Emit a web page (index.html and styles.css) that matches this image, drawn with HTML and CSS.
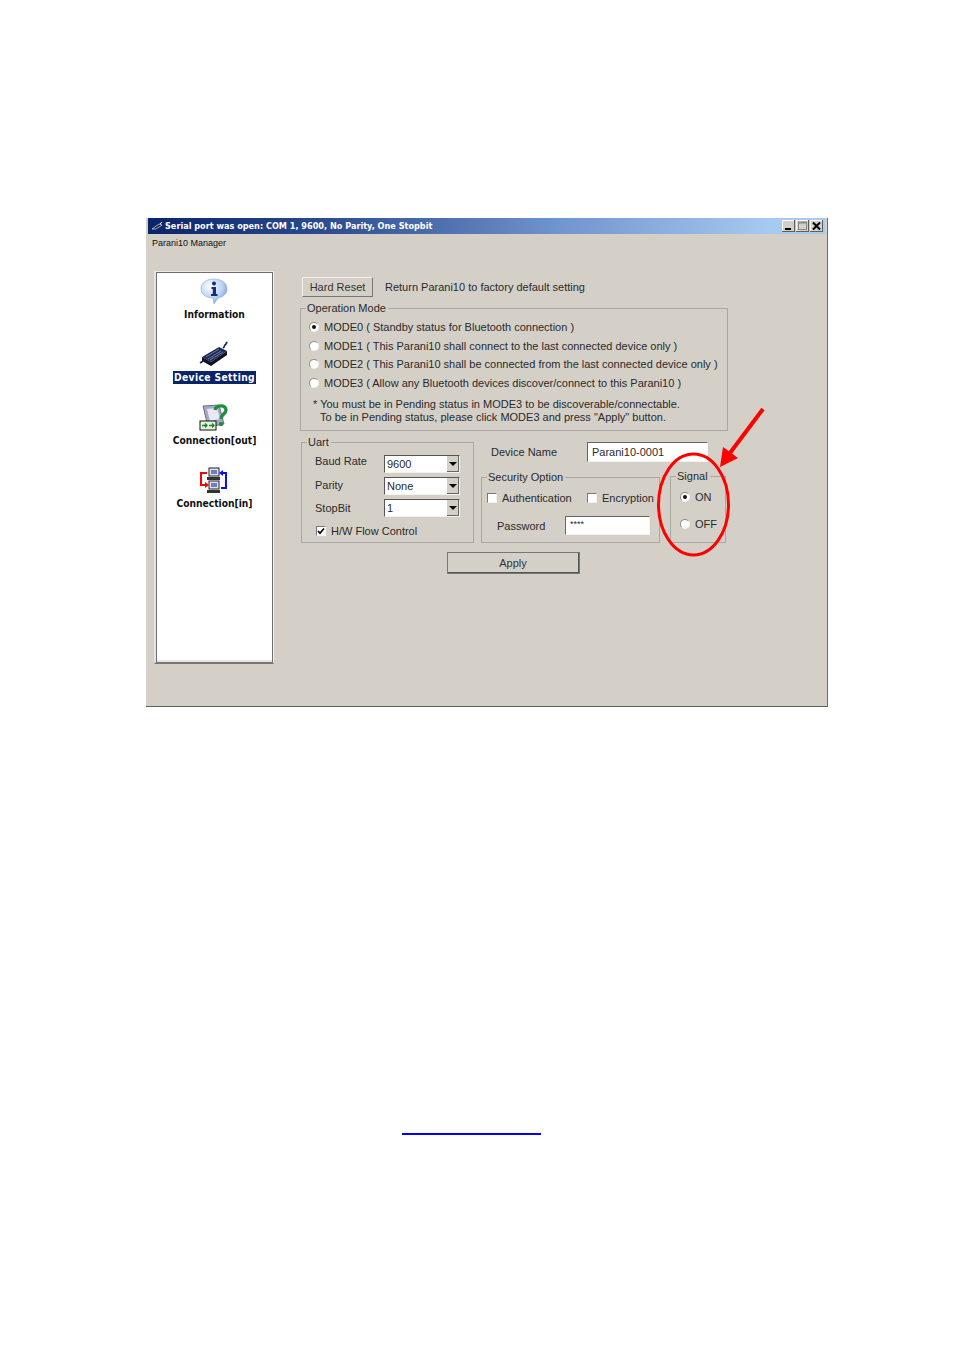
FILE: index.html
```
<!DOCTYPE html>
<html lang="en">
<head>
<meta charset="utf-8">
<title>Parani10 Manager</title>
<link rel="stylesheet" href="styles.css">
</head>
<body>
<div class="window">
  <div class="titlebar">
    <svg class="app-icon" width="12" height="10" viewBox="0 0 12 10"><path d="M1 8 L8 3 L11 4 L5 8 Z" fill="#1b1f3a" stroke="#dfe6f5" stroke-width=".7"/><path d="M9 3 L11 1" stroke="#fff"/></svg>
    <span class="title-text">Serial port was open: COM 1, 9600, No Parity, One Stopbit</span>
    <div class="win-buttons">
      <span class="win-btn"><svg width="13" height="12" viewBox="0 0 13 12"><rect x="3" y="8" width="6" height="2" fill="#000"/></svg></span>
      <span class="win-btn"><svg width="13" height="12" viewBox="0 0 13 12"><rect x="2.5" y="2.5" width="8" height="7" fill="none" stroke="#8d8a84"/><path d="M2 2.5H11" stroke="#8d8a84" stroke-width="2"/></svg></span>
      <span class="win-btn"><svg width="13" height="12" viewBox="0 0 13 12"><path d="M3 2.5 L10 9.5 M10 2.5 L3 9.5" stroke="#000" stroke-width="2"/></svg></span>
    </div>
  </div>
  <div class="app-label">Parani10 Manager</div>
  <div class="body">
    <nav class="nav">
      <div class="nav-item">
        <svg class="nav-icon" width="30" height="27" viewBox="0 0 30 27">
          <defs><radialGradient id="bub" cx=".35" cy=".3" r=".8"><stop offset="0" stop-color="#ffffff"/><stop offset=".6" stop-color="#b9d2f2"/><stop offset="1" stop-color="#6d93d6"/></radialGradient></defs>
          <path d="M15 1 C23 1 28 5 28 11 C28 16 24 19 19 20 L15 26 L14 20 C7 20 2 16 2 11 C2 5 7 1 15 1 Z" fill="url(#bub)" stroke="#8aa9dc" stroke-width=".6"/>
          <circle cx="15" cy="5.5" r="2" fill="#12307f"/>
          <path d="M12.5 9 H17 V16 H18.5 V18 H12 V16 H13.8 V11 H12.5 Z" fill="#12307f"/>
        </svg>
        <span class="nav-label">Information</span>
      </div>
      <div class="nav-item">
        <svg class="nav-icon" width="30" height="27" viewBox="0 0 30 27">
          <path d="M3 16 L20 6 L28 10 L12 21 Z" fill="#1d2b4f"/>
          <path d="M7 16 L20 8 M9 18 L22 10 M11 19 L24 11" stroke="#6a7ca6" stroke-width="1"/>
          <path d="M3 16 L3 20 L12 25 L28 14 L28 10 L12 21 Z" fill="#0d1226"/>
          <path d="M24 7 C26 6 25 4 27 3 L28 1" fill="none" stroke="#1d2b4f" stroke-width="1.8"/>
          <path d="M4 20 L1 22" stroke="#1d2b4f" stroke-width="1.8"/>
        </svg>
        <span class="nav-label selected">Device Setting</span>
      </div>
      <div class="nav-item">
        <svg class="nav-icon" width="30" height="27" viewBox="0 0 30 27">
          <path d="M4 2 L20 1 L25 20 L9 23 Z" fill="#a9a8c4" stroke="#55546f" stroke-width=".8"/>
          <path d="M8 5 L18 4 L21 15 L11 17 Z" fill="#e8e8f4"/>
          <path d="M16 6 C17 1 27 0 27 6 C27 10 22 10 22 15" fill="none" stroke="#1f8f3a" stroke-width="3.4"/>
          <circle cx="22" cy="20" r="2.2" fill="#1f8f3a"/>
          <rect x="1" y="17" width="16" height="9" fill="#e9f5dd" stroke="#111" stroke-width="1"/>
          <path d="M3 21.5H8 M6 19.5 L8 21.5 L6 23.5 M10 21.5H15 M13 19.5 L15 21.5 L13 23.5" fill="none" stroke="#0a8a2a" stroke-width="1.3"/>
        </svg>
        <span class="nav-label">Connection[out]</span>
      </div>
      <div class="nav-item">
        <svg class="nav-icon" width="30" height="27" viewBox="0 0 30 27">
          <rect x="10" y="1" width="10" height="8" fill="#dfe3ee" stroke="#222"/>
          <rect x="12" y="3" width="6" height="4" fill="#6b7fc6"/>
          <rect x="8" y="10" width="13" height="3" fill="#333"/>
          <rect x="10" y="14" width="10" height="8" fill="#dfe3ee" stroke="#222"/>
          <rect x="12" y="16" width="6" height="4" fill="#6b7fc6"/>
          <rect x="8" y="23" width="13" height="3" fill="#333"/>
          <path d="M8 6 H2 V18 H7" fill="none" stroke="#f00" stroke-width="2"/>
          <path d="M6 15 L10 18 L6 21 Z" fill="#f00"/>
          <path d="M22 21 H27 V6 H23" fill="none" stroke="#1010e0" stroke-width="2"/>
          <path d="M24 3 L20 6 L24 9 Z" fill="#1010e0"/>
        </svg>
        <span class="nav-label">Connection[in]</span>
      </div>
    </nav>
    <main class="main">
      <div class="reset-row">
        <button class="btn reset-btn" type="button">Hard Reset</button>
        <span class="reset-note">Return Parani10 to factory default setting</span>
      </div>
      <fieldset class="group op-mode">
        <legend>Operation Mode</legend>
        <div class="mode"><span class="radio on"></span><span>MODE0 ( Standby status for Bluetooth connection )</span></div>
        <div class="mode"><span class="radio"></span><span>MODE1 ( This Parani10 shall connect to the last connected device only )</span></div>
        <div class="mode"><span class="radio"></span><span>MODE2 ( This Parani10 shall be connected from the last connected device only )</span></div>
        <div class="mode"><span class="radio"></span><span>MODE3 ( Allow any Bluetooth devices discover/connect to this Parani10 )</span></div>
        <p class="note">* You must be in Pending status in MODE3 to be discoverable/connectable.<br><span class="note-indent">To be in Pending status, please click MODE3 and press "Apply" button.</span></p>
      </fieldset>
      <div class="lower">
        <fieldset class="group uart">
          <legend>Uart</legend>
          <div class="uart-row"><span class="uart-label lift">Baud Rate</span><span class="select"><span class="select-value">9600</span><span class="select-arrow"></span></span></div>
          <div class="uart-row"><span class="uart-label lift-small">Parity</span><span class="select"><span class="select-value">None</span><span class="select-arrow"></span></span></div>
          <div class="uart-row"><span class="uart-label">StopBit</span><span class="select"><span class="select-value">1</span><span class="select-arrow"></span></span></div>
          <div class="flow-row"><span class="check checked"><svg width="8" height="8" viewBox="0 0 8 8"><path d="M1 4 L3 6.2 L7 1.5" fill="none" stroke="#000" stroke-width="1.6"/></svg></span><span>H/W Flow Control</span></div>
        </fieldset>
        <div class="side">
          <div class="device-row"><span class="device-label">Device Name</span><span class="field device-field">Parani10-0001</span></div>
          <div class="side-groups">
            <fieldset class="group security">
              <legend>Security Option</legend>
              <div class="sec-row">
                <span class="check"></span><span class="auth-label">Authentication</span>
                <span class="check"></span><span>Encryption</span>
              </div>
              <div class="pass-row"><span class="pass-label">Password</span><span class="field pass-field">****</span></div>
            </fieldset>
            <fieldset class="group signal">
              <legend>Signal</legend>
              <div class="sig-row"><span class="radio on"></span><span>ON</span></div>
              <div class="sig-row"><span class="radio"></span><span>OFF</span></div>
            </fieldset>
          </div>
        </div>
      </div>
      <div class="apply-row"><button class="btn apply-btn" type="button">Apply</button></div>
    </main>
  </div>
  <svg class="annotation" width="682" height="489" viewBox="0 0 682 489">
    <ellipse cx="547.5" cy="286.5" rx="35" ry="50.5" fill="none" stroke="#f00" stroke-width="3"/>
    <path d="M617 191 L581 239" stroke="#f00" stroke-width="4"/>
    <path d="M574 249 L577 229 L592 240 Z" fill="#f00"/>
  </svg>
</div>
<div class="link-rule"></div>
</body>
</html>
```
FILE: styles.css
```
* { box-sizing: border-box; }
html, body { margin: 0; padding: 0; background: #fff; }
body { width: 954px; height: 1351px; padding: 218px 0 0 146px; overflow: hidden;
  font-family: "Liberation Sans", Arial, sans-serif; font-size: 11px; letter-spacing: 0; color: #2a2a2a; }

.window { position: relative; width: 682px; height: 489px; background: #d4d0c8;
  border-right: 1px solid #6a6a6a; border-bottom: 1px solid #5c5c5c; padding: 0 0 0 2px; }
.titlebar { height: 16px; width: 677px; display: flex; align-items: center; padding: 0 2px 0 3px;
  background: linear-gradient(90deg, #0a246a 0%, #2b4a8e 25%, #6f93cc 60%, #a6caf0 92%); }
.app-icon { flex: none; margin-right: 2px; }
.title-text { color: #fff; font: bold 9.05px "DejaVu Sans Condensed", "DejaVu Sans", sans-serif; white-space: nowrap; }
.win-buttons { margin-left: auto; display: flex; gap: 1px; }
.win-btn { display: block; width: 13px; height: 12px; background: #d4d0c8; box-shadow: inset -1px -1px 0 #5f5f5f, inset 1px 1px 0 #fff; }
.app-label { height: 18px; line-height: 18px; padding-left: 4px; font-size: 9px; color: #111; }

.body { display: flex; padding: 19px 0 0 6px; }
.nav { flex: none; width: 120px; height: 393px; padding: 6px 0 0; background: #fff;
  border-style: solid; border-width: 1px 1px 2px 2px; border-color: #ece9e4 #f4f2ee #777 #e8e5df;
  box-shadow: inset 1px 1px 0 #6f6f6f, inset -1px 0 0 #6f6f6f, inset 0 -2px 0 #ebe6de;
  display: flex; flex-direction: column; align-items: center; }
.nav-item { height: 63px; flex: none; width: 100%; display: flex; flex-direction: column; align-items: center; }
.nav-icon { flex: none; display: block; margin-right: 2px; }
.nav-label { margin-top: 3px; height: 13px; padding: 0 1px; font: bold 10.2px/13px "DejaVu Sans Condensed", "Liberation Sans", sans-serif; color: #111; white-space: nowrap; }
.nav-label.selected { background: #0a246a; color: #fff; letter-spacing: .4px; }

.main { flex: none; width: 428px; margin-left: 27px; padding-top: 6px; position: relative; }
.reset-row { display: flex; align-items: center; height: 20px; margin-left: 1px; }
.btn { font: inherit; color: #333; background: #d4d0c8; padding: 0; }
.reset-btn { width: 71px; height: 20px; border: 1px solid #f4f2ee; border-right-color: #777; border-bottom-color: #777; }
.reset-note { margin-left: 12px; }

.group { margin: 0; padding: 0; min-width: 0; border: 1px solid #a9a7a1; }
.group legend { padding: 0 2px 0 1px; height: 14px; line-height: 14px; }
.op-mode { width: 428px; height: 130px; margin: 4px 0 0 -1px; padding: 3px 0 0 8px; }
.op-mode legend { margin-left: -3px; }
.mode { display: flex; align-items: center; height: 18.5px; gap: 5px; white-space: nowrap; }
.radio { flex: none; position: relative; width: 10px; height: 10px; border-radius: 50%; background: #fff; border: 1px solid #8e8c86; border-right-color: #f3f1ec; border-bottom-color: #f3f1ec; }
.radio.on::after { content: ""; position: absolute; left: 2px; top: 2px; width: 4px; height: 4px; border-radius: 50%; background: #111; }
.note { margin: 6px 0 0 4px; line-height: 13px; white-space: nowrap; }
.note-indent { margin-left: 7px; }

.lower { display: flex; margin-top: 4px; }
.uart { flex: none; width: 173px; height: 108px; padding: 6px 0 0 13px; }
.uart legend { margin-left: -8px; }
.uart-row { display: flex; align-items: center; height: 18px; margin-bottom: 4px; }
.uart-label { width: 69px; }
.lift { margin-top: -6px; }
.lift-small { margin-top: -2px; }
.select { flex: none; display: flex; width: 76px; height: 18px; background: #fff; border: 1px solid #555; border-right-color: #f4f2ee; border-bottom-color: #f4f2ee; align-items: center; }
.select-value { flex: 1; padding-left: 2px; }
.select-arrow { flex: none; width: 12px; height: 16px; background: #d4d0c8; box-shadow: inset -1px -1px 0 #666; position: relative; }
.select-arrow::after { content: ""; position: absolute; left: 2px; top: 6px; border: 4px solid transparent; border-top-color: #000; border-bottom-width: 0; }
.flow-row { display: flex; align-items: center; gap: 5px; height: 14px; margin-top: 7px; margin-left: 1px; white-space: nowrap; }
.check { flex: none; display: flex; align-items: center; justify-content: center; width: 10px; height: 10px; background: #fff; border: 1px solid #777; border-right-color: #f4f2ee; border-bottom-color: #f4f2ee; }

.side { flex: none; width: 246px; margin-left: 7px; padding-top: 7px; }
.device-row { display: flex; align-items: center; height: 20px; width: 227px; }
.device-label { width: 106px; padding-left: 10px; }
.field { display: block; background: #fff; border: 1px solid #666; border-right-color: #f4f2ee; border-bottom-color: #f4f2ee; white-space: nowrap; }
.device-field { width: 121px; height: 20px; line-height: 18px; padding-left: 4px; }
.side-groups { display: flex; margin-top: 8px; }
.security { flex: none; width: 179px; height: 73px; padding: 7px 0 0 5px; }
.security legend { margin-left: 0; }
.sec-row { display: flex; align-items: center; height: 14px; gap: 5px; white-space: nowrap; }
.auth-label { width: 80px; }
.pass-row { display: flex; align-items: center; height: 19px; margin-top: 11px; }
.pass-label { width: 78px; padding-left: 10px; }
.pass-field { width: 85px; height: 19px; line-height: 15px; padding-left: 4px; font-size: 9px; }
.signal { flex: none; width: 56px; height: 74px; margin: -1px 0 0 10px; padding: 7px 0 0 9px; }
.signal legend { margin-left: -4px; }
.sig-row { display: flex; align-items: center; gap: 5px; height: 14px; margin-bottom: 13px; }

.apply-row { margin-top: 9px; padding-left: 146px; }
.apply-btn { width: 133px; height: 22px; border: 1px solid #f4f2ee; border-right: 2px solid #555; border-bottom: 2px solid #555; outline: 1px solid #777; outline-offset: -1px; }

.annotation { position: absolute; left: 0; top: 0; pointer-events: none; }
.link-rule { width: 139px; height: 2px; margin: 426px 0 0 256px; background: #0000ff; }
```
